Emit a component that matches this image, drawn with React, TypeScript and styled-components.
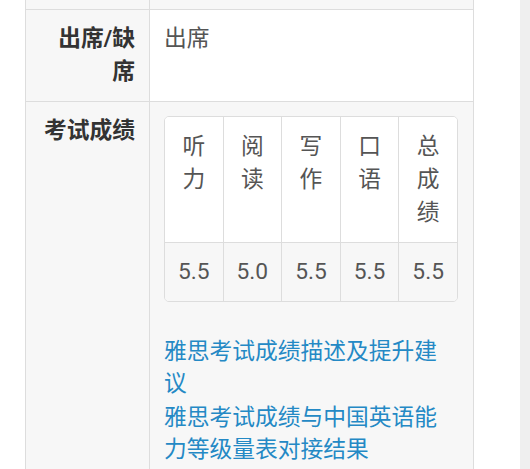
import React from "react";
import styled, { createGlobalStyle } from "styled-components";

const GlobalStyle = createGlobalStyle`
  html, body {
    margin: 0;
    padding: 0;
    background: #ffffff;
  }
  body {
    font-family: Roboto, "Noto Sans CJK SC", "Noto Sans", sans-serif;
    font-size: 22.75px;
  }
  * { box-sizing: border-box; }
`;

const Page = styled.div`
  display: flex;
  height: 469px;
  overflow: hidden;
`;

const Main = styled.div`
  padding-left: 25px;
`;

const Spacer = styled.div`
  flex: 1;
`;

const Strip = styled.div`
  width: 10px;
  background: #efefef;
`;

const Table = styled.div`
  width: 449px;
  border-left: 1px solid #dddddd;
  border-right: 1px solid #dddddd;
`;

const Row = styled.div<{ $striped?: boolean }>`
  display: grid;
  grid-template-columns: 124px 1fr;
  border-bottom: 1px solid #dddddd;
  background: ${(p) => (p.$striped ? "#f7f7f7" : "#ffffff")};
`;

const Label = styled.div<{ $stub?: boolean }>`
  padding: ${(p) => (p.$stub ? "0" : "12px 14px 13px 14px")};
  height: ${(p) => (p.$stub ? "9px" : "auto")};
  text-align: right;
  font-weight: 700;
  color: #333333;
  line-height: 33px;
  background: #f7f7f7;
  border-right: 1px solid #dddddd;
`;

const Value = styled.div<{ $stub?: boolean }>`
  padding: ${(p) => (p.$stub ? "0" : "12px 15px 13px 14px")};
  color: #555555;
  line-height: 33px;
`;

const ScoreTable = styled.div`
  margin-top: 2px;
  display: grid;
  grid-template-columns: repeat(5, 1fr);
  border: 1px solid #dddddd;
  border-radius: 5px;
  overflow: hidden;
`;

const ScoreCell = styled.div<{ $head?: boolean; $last?: boolean }>`
  padding: 12.5px 13px 13px;
  text-align: center;
  line-height: 33px;
  color: #555555;
  background: ${(p) => (p.$head ? "#ffffff" : "#f7f7f7")};
  border-right: ${(p) => (p.$last ? "none" : "1px solid #dddddd")};
  border-bottom: ${(p) => (p.$head ? "1px solid #dddddd" : "none")};
`;

const LinkList = styled.div`
  margin-top: 34px;
  display: flex;
  flex-direction: column;
  gap: 2px;
`;

const Link = styled.a`
  display: block;
  color: #2489c5;
  text-decoration: none;
  line-height: 32px;
`;

const heads = ["听力", "阅读", "写作", "口语", "总成绩"];
const scores = ["5.5", "5.0", "5.5", "5.5", "5.5"];

export default function App() {
  return (
    <>
      <GlobalStyle />
      <Page>
        <Main>
          <Table>
            <Row $striped>
              <Label $stub />
              <Value $stub />
            </Row>
            <Row>
              <Label>出席/缺席</Label>
              <Value>出席</Value>
            </Row>
            <Row $striped>
              <Label>考试成绩</Label>
              <Value>
                <ScoreTable>
                  {heads.map((h, i) => (
                    <ScoreCell key={h} $head $last={i === heads.length - 1}>
                      {h}
                    </ScoreCell>
                  ))}
                  {scores.map((s, i) => (
                    <ScoreCell key={i} $last={i === scores.length - 1}>
                      {s}
                    </ScoreCell>
                  ))}
                </ScoreTable>
                <LinkList>
                  <Link href="#">雅思考试成绩描述及提升建议</Link>
                  <Link href="#">雅思考试成绩与中国英语能力等级量表对接结果</Link>
                </LinkList>
              </Value>
            </Row>
          </Table>
        </Main>
        <Spacer />
        <Strip />
      </Page>
    </>
  );
}
